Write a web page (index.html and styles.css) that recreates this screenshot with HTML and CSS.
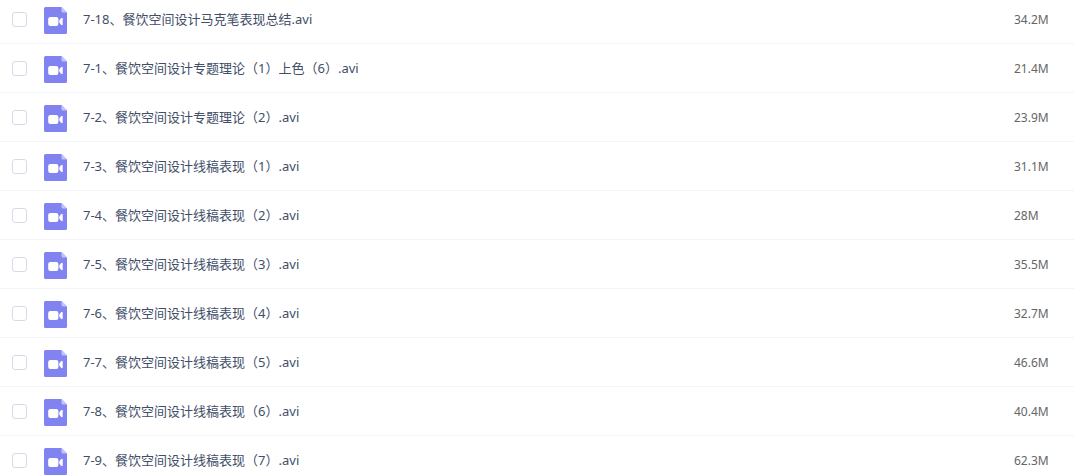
FILE: index.html
```html
<!DOCTYPE html>
<html lang="zh-CN">
<head>
  <meta charset="UTF-8">
  <meta name="viewport" content="width=device-width, initial-scale=1.0">
  <title>文件列表</title>
  <link rel="stylesheet" href="styles.css">
</head>
<body>
  <svg class="sprite" aria-hidden="true">
    <symbol id="icon-video" viewBox="0 0 23 27">
      <path fill="#8183f1" d="M1.500 0H17.500L23 5.500v20a1.500 1.500 0 0 1-1.500 1.500h-20A1.500 1.500 0 0 1 0 25.500v-24A1.500 1.500 0 0 1 1.500 0z"/>
      <path fill="#c3c4fa" d="M17.500 0L23 5.500h-4A1.500 1.500 0 0 1 17.500 4z"/>
      <rect fill="#fff" x="4.200" y="10" width="10.200" height="9" rx="2.200"/>
      <path fill="#fff" d="M15 14.500q.4-1.600 2-3.300 1.700-1.200 1.700.6v5.400q0 1.800-1.700.6-1.600-1.700-2-3.300z"/>
    </symbol>
  </svg>

  <table class="file-list">
    <tbody>
      <tr class="file-row">
        <td class="file-check"><input type="checkbox" id="file-18"></td>
        <td class="file-icon"><svg><use href="#icon-video"/></svg></td>
        <td class="file-name"><label for="file-18">7-18、餐饮空间设计马克笔表现总结.avi</label></td>
        <td class="file-size">34.2M</td>
      </tr>
      <tr class="file-row">
        <td class="file-check"><input type="checkbox" id="file-1"></td>
        <td class="file-icon"><svg><use href="#icon-video"/></svg></td>
        <td class="file-name"><label for="file-1">7-1、餐饮空间设计专题理论（1）上色（6）.avi</label></td>
        <td class="file-size">21.4M</td>
      </tr>
      <tr class="file-row">
        <td class="file-check"><input type="checkbox" id="file-2"></td>
        <td class="file-icon"><svg><use href="#icon-video"/></svg></td>
        <td class="file-name"><label for="file-2">7-2、餐饮空间设计专题理论（2）.avi</label></td>
        <td class="file-size">23.9M</td>
      </tr>
      <tr class="file-row">
        <td class="file-check"><input type="checkbox" id="file-3"></td>
        <td class="file-icon"><svg><use href="#icon-video"/></svg></td>
        <td class="file-name"><label for="file-3">7-3、餐饮空间设计线稿表现（1）.avi</label></td>
        <td class="file-size">31.1M</td>
      </tr>
      <tr class="file-row">
        <td class="file-check"><input type="checkbox" id="file-4"></td>
        <td class="file-icon"><svg><use href="#icon-video"/></svg></td>
        <td class="file-name"><label for="file-4">7-4、餐饮空间设计线稿表现（2）.avi</label></td>
        <td class="file-size">28M</td>
      </tr>
      <tr class="file-row">
        <td class="file-check"><input type="checkbox" id="file-5"></td>
        <td class="file-icon"><svg><use href="#icon-video"/></svg></td>
        <td class="file-name"><label for="file-5">7-5、餐饮空间设计线稿表现（3）.avi</label></td>
        <td class="file-size">35.5M</td>
      </tr>
      <tr class="file-row">
        <td class="file-check"><input type="checkbox" id="file-6"></td>
        <td class="file-icon"><svg><use href="#icon-video"/></svg></td>
        <td class="file-name"><label for="file-6">7-6、餐饮空间设计线稿表现（4）.avi</label></td>
        <td class="file-size">32.7M</td>
      </tr>
      <tr class="file-row">
        <td class="file-check"><input type="checkbox" id="file-7"></td>
        <td class="file-icon"><svg><use href="#icon-video"/></svg></td>
        <td class="file-name"><label for="file-7">7-7、餐饮空间设计线稿表现（5）.avi</label></td>
        <td class="file-size">46.6M</td>
      </tr>
      <tr class="file-row">
        <td class="file-check"><input type="checkbox" id="file-8"></td>
        <td class="file-icon"><svg><use href="#icon-video"/></svg></td>
        <td class="file-name"><label for="file-8">7-8、餐饮空间设计线稿表现（6）.avi</label></td>
        <td class="file-size">40.4M</td>
      </tr>
      <tr class="file-row">
        <td class="file-check"><input type="checkbox" id="file-9"></td>
        <td class="file-icon"><svg><use href="#icon-video"/></svg></td>
        <td class="file-name"><label for="file-9">7-9、餐饮空间设计线稿表现（7）.avi</label></td>
        <td class="file-size">62.3M</td>
      </tr>
    </tbody>
  </table>
</body>
</html>
```
FILE: styles.css
```css
:root {
  --text-color: #424e67;
  --size-color: #666;
  --border-color: #f1f4fa;
  --check-color: #d5dbe9;
}

body {
  margin: 0;
  height: 100vh;
  overflow: hidden;
  background-color: #fff;
  color: var(--text-color);
  font-family: Tahoma, "Noto Sans", "Noto Sans CJK SC", sans-serif;
  font-size: 13px;
}

.sprite {
  display: none;
}

.file-list {
  width: 100%;
  margin-top: -5px;
  border-collapse: separate;
  border-spacing: 0;
}

.file-row td {
  box-sizing: border-box;
  height: 49px;
  padding: 0;
  border-bottom: 1px solid var(--border-color);
  line-height: 20px;
  text-align: left;
  vertical-align: middle;
}

.file-row .file-check {
  width: 44px;
  padding-left: 12px;
}

.file-check input {
  appearance: none;
  display: block;
  box-sizing: border-box;
  width: 15px;
  height: 15px;
  margin: 0;
  border: 1px solid var(--check-color);
  border-radius: 3px;
  background-color: #fff;
  cursor: pointer;
}

.file-check input:checked {
  background-color: #8183f1;
}

.file-row .file-icon {
  width: 39px;
  padding-top: 2px;
}

.file-icon svg {
  display: block;
  width: 23px;
  height: 27px;
}

.file-name label {
  cursor: pointer;
}

.file-row .file-size {
  width: 60px;
  padding-top: 2px;
  color: var(--size-color);
  font-size: 12px;
}
```
